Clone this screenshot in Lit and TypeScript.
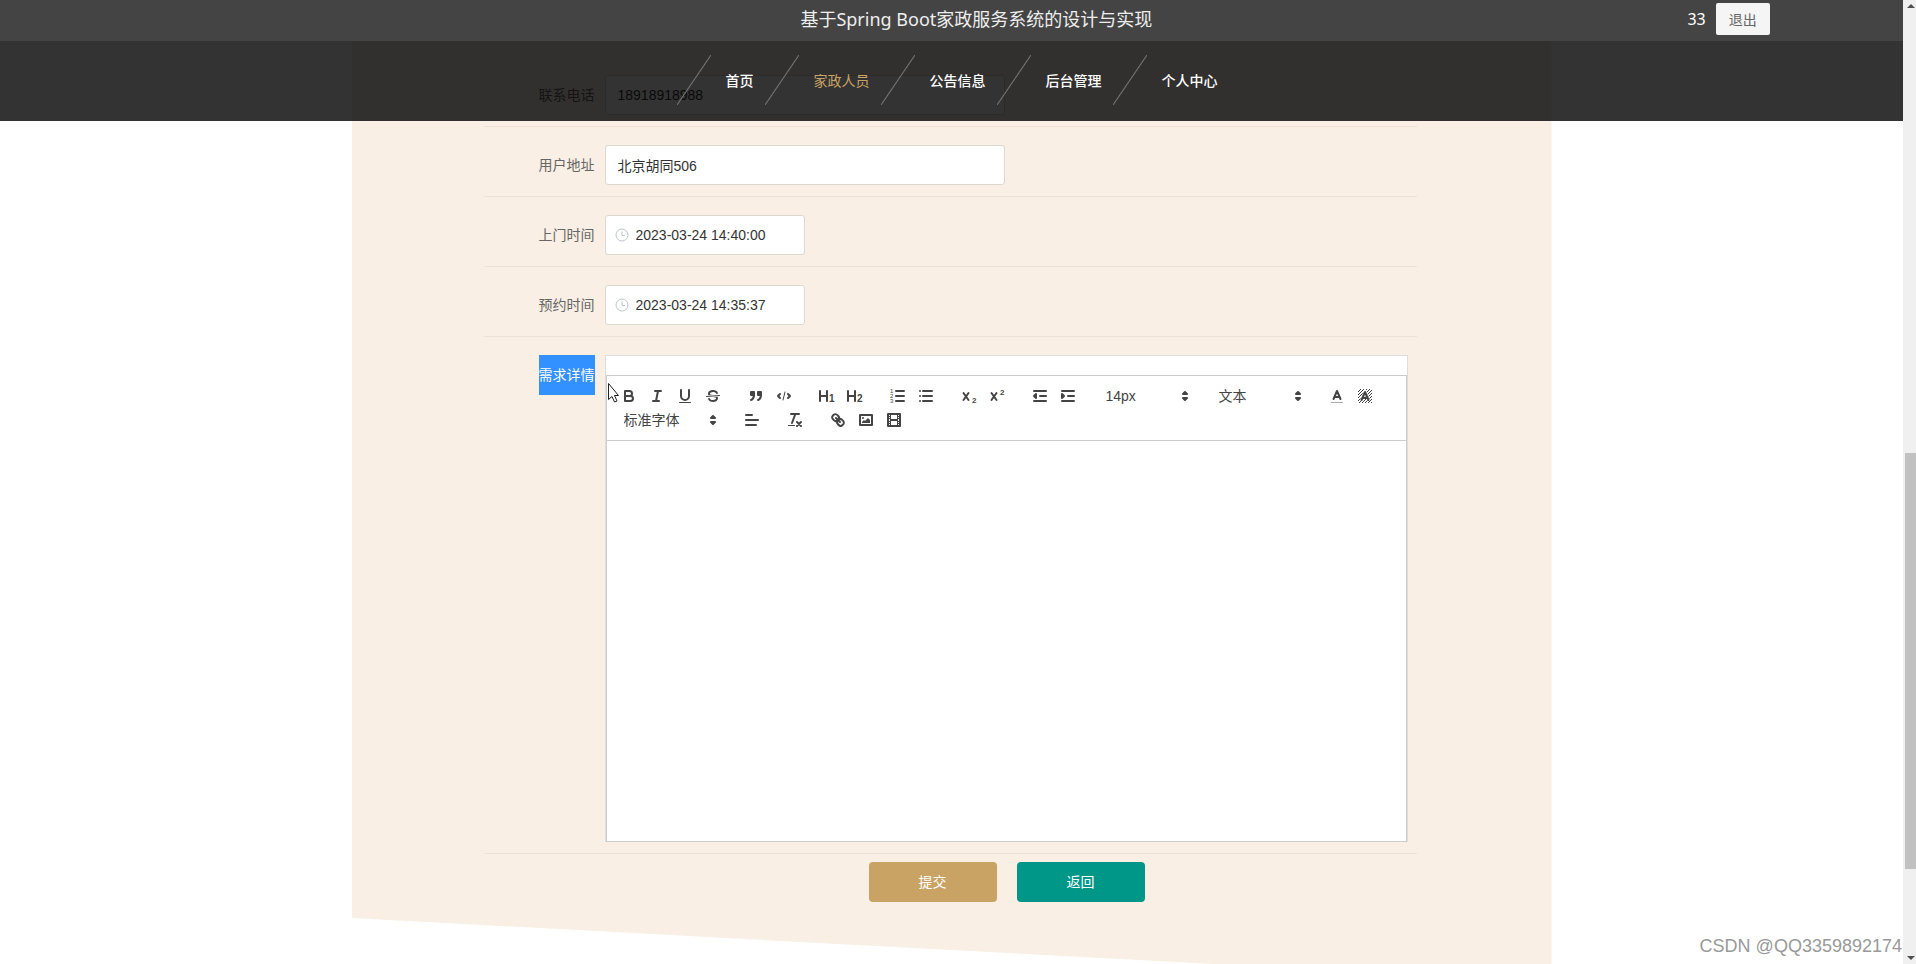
import { LitElement, html, css, svg } from "lit";
import { customElement, property, state } from "lit/decorators.js";
import { classMap } from "lit/directives/class-map.js";

const icons: Record<string, unknown> = {
  bold: svg`<path class="s" d="M5,4H9.5A2.5,2.5,0,0,1,9.5,9H5Z"/><path class="s" d="M5,9h5.5A2.5,2.5,0,0,1,10.5,14H5Z"/>`,
  italic: svg`<path class="s" d="M7,4H13M5,14H11M8,14L10,4"/>`,
  underline: svg`<path class="s" d="M5,3V9a4,4,0,0,0,8,0V3"/><rect class="f" x="3" y="15" width="12" height="1" rx=".5"/>`,
  strike: svg`<path class="s thin" d="M15.5,8.5L2.5,9.5"/><path class="f" d="M9.007,8C6.542,7.791,6,7.519,6,6.5,6,5.792,7.283,5,9,5c1.571,0,2.765.679,2.969,1.309a1,1,0,0,0,1.9-.617C13.356,4.106,11.354,3,9,3,6.2,3,4,4.538,4,6.5a3.2,3.2,0,0,0,.5,1.843Z"/><path class="f" d="M8.984,10C11.457,10.208,12,10.479,12,11.5c0,.708-1.283,1.5-3,1.5-1.571,0-2.765-.679-2.969-1.309a1,1,0,1,0-1.9.617C4.644,13.894,6.646,15,9,15c2.8,0,5-1.538,5-3.5a3.2,3.2,0,0,0-.5-1.843Z"/>`,
  quote: svg`<path class="s f" d="M4,5h3v3H4ZM11,5h3v3h-3Z"/><path class="s f" d="M7,8c0,4.031-3,5-3,5M14,8c0,4.031-3,5-3,5"/>`,
  code: svg`<path class="s" d="M5,7L3,9L5,11M13,7L15,9L13,11"/><path class="s thin" d="M10,5L8,13"/>`,
  h1: svg`<path class="s" d="M2,4V14M9,4V14M2,9H9"/><text x="11" y="15" font-size="10" font-weight="700">1</text>`,
  h2: svg`<path class="s" d="M2,4V14M9,4V14M2,9H9"/><text x="11" y="15" font-size="10" font-weight="700">2</text>`,
  ordered: svg`<path class="s" d="M7,4H15M7,9H15M7,14H15"/><text x="1" y="6" font-size="6">1</text><text x="1" y="11" font-size="6">2</text><text x="1" y="16" font-size="6">3</text>`,
  bullet: svg`<path class="s" d="M6,4H15M6,9H15M6,14H15M3,4h.01M3,9h.01M3,14h.01"/>`,
  sub: svg`<path class="s" d="M3.5,6L8.5,13M8.5,6L3.5,13"/><text x="12" y="16" font-size="8" font-weight="700">2</text>`,
  sup: svg`<path class="s" d="M3.5,6L8.5,13M8.5,6L3.5,13"/><text x="12" y="8" font-size="8" font-weight="700">2</text>`,
  outdent: svg`<path class="s" d="M3,14H15M3,4H15M9,9H15"/><path class="s f" d="M5,7V11L3,9Z"/>`,
  indent: svg`<path class="s" d="M3,14H15M3,4H15M9,9H15"/><path class="s f" d="M3,7V11L5,9Z"/>`,
  color: svg`<path class="bar" d="M3,15.5H15"/><path class="s" d="M5.5,12L9,4L12.5,12M6.6,10H11.4"/>`,
  background: svg`<path class="s hatch" d="M2,5L5,2M2,8L8,2M2,11L11,2M2,14L14,2M3,16L16,3M6,16L16,6M9,16L16,9M12,16L16,12M15,16L16,15"/><path class="halo" d="M5.5,13L9,5L12.5,13"/><path class="s" d="M5.5,13L9,5L12.5,13M6.6,11H11.4"/>`,
  align: svg`<path class="s" d="M3,9H15M3,14H13M3,4H9"/>`,
  clean: svg`<path class="s" d="M5,3H13M6,12L9.35,3M11,11L15,15M15,11L11,15"/><rect class="f" x="2" y="14" width="7" height="1" rx=".5"/>`,
  link: svg`<path class="s" d="M7,7L11,11"/><path class="s" d="M8.9,4.577a3.476,3.476,0,0,1,.36,4.679A3.476,3.476,0,0,1,4.577,8.9C3.185,7.5,2.035,6.4,4.217,4.217S7.5,3.185,8.9,4.577Z"/><path class="s" d="M13.423,9.1a3.476,3.476,0,0,0-4.679-.36,3.476,3.476,0,0,0,.36,4.679c1.392,1.392,2.5,2.542,4.679.36S14.815,10.5,13.423,9.1Z"/>`,
  image: svg`<rect class="s" x="3" y="4" width="12" height="10"/><circle class="f" cx="6" cy="7" r="1"/><path class="f" d="M5,12V11L7,9L8,10L11,7L13,9V12Z"/>`,
  video: svg`<rect class="s" x="3" y="3" width="12" height="12"/><path class="f" d="M5,3h1v12H5ZM12,3h1v12H12ZM5,8h8v2H5ZM3,5h3v1H3ZM3,7h3v1H3ZM3,10h3v1H3ZM3,12h3v1H3ZM12,5h3v1H12ZM12,7h3v1H12ZM12,10h3v1H12ZM12,12h3v1H12Z"/>`,
};

type Tool = { icon: string; title: string };
type Picker = { label: string; options: string[]; wide?: boolean };

const b = (icon: string, title: string): Tool => ({ icon, title });

const tools: (Tool[] | Picker)[] = [
  [b("bold", "加粗"), b("italic", "斜体"), b("underline", "下划线"), b("strike", "删除线")],
  [b("quote", "引用"), b("code", "代码")],
  [b("h1", "标题一"), b("h2", "标题二")],
  [b("ordered", "有序列表"), b("bullet", "无序列表")],
  [b("sub", "下标"), b("sup", "上标")],
  [b("outdent", "减少缩进"), b("indent", "增加缩进")],
  { label: "字号", options: ["14px"] },
  { label: "标题", options: ["文本"] },
  [b("color", "文字颜色"), b("background", "背景颜色")],
  { label: "字体", options: ["标准字体"], wide: true },
  [b("align", "对齐")],
  [b("clean", "清除格式")],
  [b("link", "链接"), b("image", "图片"), b("video", "视频")],
];

@customElement("rich-editor")
export class RichEditor extends LitElement {
  static styles = css`
    :host {
      display: block;
      box-sizing: border-box;
      border: 1px solid #ddd;
      border-bottom: 0;
      background: #fff;
      padding-top: 19px;
      color: #444;
      font: 14px/24px "Liberation Sans", "Noto Sans CJK SC", sans-serif;
    }
    .toolbar {
      display: flex;
      flex-wrap: wrap;
      column-gap: 15px;
      padding: 8px;
      border: 1px solid #ccc;
    }
    .group {
      display: flex;
    }
    .tool {
      box-sizing: border-box;
      width: 28px;
      height: 24px;
      padding: 3px 5px;
      border: 0;
      background: none;
      cursor: pointer;
    }
    svg {
      display: block;
      width: 18px;
      height: 18px;
    }
    .s {
      fill: none;
      stroke: #444;
      stroke-width: 2;
      stroke-linecap: round;
      stroke-linejoin: round;
    }
    .thin {
      stroke-width: 1;
    }
    .f {
      fill: #444;
    }
    .bar {
      stroke: #aaa;
      stroke-width: 1;
    }
    .hatch {
      stroke-width: 1;
      stroke-linecap: butt;
    }
    .halo {
      fill: none;
      stroke: #fff;
      stroke-width: 3;
    }
    text {
      fill: #444;
      font-family: "Liberation Sans", sans-serif;
    }
    .picker {
      display: grid;
      width: 98px;
      height: 24px;
      align-items: center;
    }
    .wide {
      width: 108px;
    }
    .picker > * {
      grid-area: 1 / 1;
    }
    .picker svg {
      justify-self: end;
      margin-right: 1px;
      pointer-events: none;
    }
    .select {
      appearance: none;
      width: 100%;
      height: 24px;
      padding: 0 9px;
      border: 0;
      background: none;
      color: #444;
      font: inherit;
    }
    .area {
      display: block;
      box-sizing: border-box;
      width: 100%;
      height: 401px;
      padding: 12px 15px;
      border: 1px solid #ccc;
      border-top: 0;
      resize: none;
      outline: 0;
      background: #fff;
      font: inherit;
    }
  `;

  @property() label = "";
  @state() private content = "";

  private renderPicker(p: Picker) {
    return html`<span class=${classMap({ picker: true, wide: !!p.wide })}>
      <select class="select" aria-label=${p.label}>
        ${p.options.map((o) => html`<option>${o}</option>`)}
      </select>
      <svg viewBox="0 0 18 18" aria-hidden="true">
        <path class="s f" d="M7,11L9,13L11,11ZM7,7L9,5L11,7Z" />
      </svg>
    </span>`;
  }

  private renderGroup(group: Tool[]) {
    return html`<span class="group">
      ${group.map(
        (t) => html`<button class="tool" type="button" aria-label=${t.title}>
          <svg viewBox="0 0 18 18" aria-hidden="true">${icons[t.icon]}</svg>
        </button>`
      )}
    </span>`;
  }

  render() {
    return html`
      <div class="toolbar" role="toolbar">
        ${tools.map((t) => (Array.isArray(t) ? this.renderGroup(t) : this.renderPicker(t)))}
      </div>
      <textarea
        class="area"
        aria-label=${this.label}
        .value=${this.content}
        @input=${(e: Event) => (this.content = (e.target as HTMLTextAreaElement).value)}
      ></textarea>
    `;
  }
}

const fields = [
  { id: "phone", label: "联系电话", value: "18918918988", date: false },
  { id: "address", label: "用户地址", value: "北京胡同506", date: false },
  { id: "visit", label: "上门时间", value: "2023-03-24 14:40:00", date: true },
  { id: "booking", label: "预约时间", value: "2023-03-24 14:35:37", date: true },
];

@customElement("app-root")
export class AppRoot extends LitElement {
  static styles = css`
    :host {
      display: flex;
      height: 100vh;
      overflow: hidden;
      background: #fff;
      font: 14px/20px "Noto Sans CJK SC", sans-serif;
    }
    .page {
      position: relative;
      flex: 1;
      min-width: 0;
      overflow: hidden;
    }
    .header {
      position: absolute;
      inset: 0 0 auto;
      z-index: 2;
    }
    .topbar {
      display: flex;
      justify-content: space-between;
      align-items: center;
      box-sizing: border-box;
      height: 41px;
      padding: 0 7% 3px;
      background: #444;
      color: #fff;
      font-family: "Noto Sans", "Noto Sans CJK SC", sans-serif;
    }
    .brand {
      width: 132px;
    }
    .title {
      margin: 0;
      color: #eee;
      font-size: 18px;
      font-weight: 400;
      line-height: 24px;
    }
    .account {
      display: flex;
      align-items: center;
      gap: 10px;
      font-size: 16px;
    }
    .logout {
      height: 32px;
      padding: 0 13px;
      border: 0;
      border-radius: 2px;
      background: #f5f5f5;
      color: #666;
      font: 14px/32px "Noto Sans CJK SC", sans-serif;
    }
    .nav {
      background: rgba(0, 0, 0, 0.8);
    }
    .menu {
      display: flex;
      justify-content: center;
      margin: 0;
      padding: 0 0 2px 36px;
      list-style: none;
      line-height: 78px;
    }
    .item {
      display: flex;
      align-items: center;
      padding-right: 28px;
    }
    .item::before {
      content: "";
      width: 34px;
      height: 50px;
      margin: 0 15px 0 -17px;
      background: linear-gradient(
        to bottom right,
        transparent calc(50% - 1px),
        #777 50%,
        transparent calc(50% + 1px)
      );
    }
    .link {
      color: #fff;
      font-weight: 500;
      text-decoration: none;
    }
    .active {
      color: #c9a363;
      font-weight: 400;
    }
    .panel {
      box-sizing: border-box;
      max-width: 1200px;
      margin: 0 auto;
      padding: 57px 135px 80px 132px;
      background: #f9efe4;
      clip-path: polygon(0 0, 100% 0, 100% 100%, 0 calc(100% - 64px));
    }
    .row {
      display: flex;
      gap: 10px;
      padding: 18px 9px 11px 55px;
      border-bottom: 1px solid #eee2d8;
    }
    .label {
      box-sizing: border-box;
      width: 56px;
      flex: none;
      height: 40px;
      line-height: 38px;
      color: #666;
    }
    .selected {
      background: #3390ff;
      color: #fff;
    }
    .field {
      display: grid;
      align-items: center;
      width: 400px;
    }
    .date {
      width: 200px;
    }
    .field > * {
      grid-area: 1 / 1;
    }
    .input {
      box-sizing: border-box;
      width: 100%;
      height: 40px;
      padding: 0 12px;
      border: 1px solid #ddd8cf;
      border-radius: 3px;
      background: #fff;
      color: #333;
      font: 14px/20px "Liberation Sans", "Noto Sans CJK SC", sans-serif;
    }
    .date .input {
      padding-left: 30px;
    }
    .clock {
      width: 14px;
      height: 14px;
      margin-left: 10px;
      fill: none;
      stroke: #c0c4cc;
      pointer-events: none;
      z-index: 1;
    }
    rich-editor {
      flex: 1;
      min-width: 0;
    }
    .actions {
      display: flex;
      justify-content: center;
      gap: 20px;
      padding: 8px 0 0 113px;
    }
    .action {
      width: 128px;
      height: 40px;
      padding: 0 0 2px;
      border: 0;
      border-radius: 4px;
      background: #c9a363;
      color: #fff;
      font: inherit;
    }
    .back {
      background: #009688;
    }
    .scrollbar {
      flex: none;
      display: flex;
      flex-direction: column;
      align-items: center;
      box-sizing: border-box;
      width: 13px;
      padding: 4px 0 4px 2px;
      background: #f0f0f0;
    }
    .arrow {
      width: 8px;
      height: 4px;
      fill: #505050;
    }
    .track {
      flex: 1;
      display: flex;
      flex-direction: column;
      width: 100%;
    }
    .before {
      flex: 445;
    }
    .thumb {
      flex: 416;
      background: #c1c1c1;
    }
    .after {
      flex: 87;
    }
    .cursor {
      position: absolute;
      left: 0;
      top: 27px;
      width: 14px;
      height: 22px;
      pointer-events: none;
    }
    .editor {
      position: relative;
      display: flex;
      flex: 1;
      min-width: 0;
    }
    .watermark {
      position: absolute;
      right: 1px;
      bottom: 7px;
      color: #999;
      font: 18px/22px "Liberation Sans", sans-serif;
    }
  `;

  @state() private current = "家政人员";

  private menu = ["首页", "家政人员", "公告信息", "后台管理", "个人中心"];

  render() {
    return html`
      <div class="page">
        <header class="header">
          <div class="topbar">
            <span class="brand"></span>
            <h1 class="title">基于Spring Boot家政服务系统的设计与实现</h1>
            <div class="account">
              <span>33</span>
              <button class="logout" type="button">退出</button>
            </div>
          </div>
          <nav class="nav">
            <ul class="menu">
              ${this.menu.map(
                (m) => html`<li class="item">
                  <a
                    class=${classMap({ link: true, active: m === this.current })}
                    href="#"
                    @click=${(e: Event) => {
                      e.preventDefault();
                      this.current = m;
                    }}
                    >${m}</a
                  >
                </li>`
              )}
            </ul>
          </nav>
        </header>
        <main>
          <form class="panel" @submit=${(e: Event) => e.preventDefault()}>
            ${fields.map(
              (f) => html`<div class="row">
                <label class="label" for=${f.id}>${f.label}</label>
                <div class=${classMap({ field: true, date: f.date })}>
                  <input class="input" id=${f.id} type="text" .value=${f.value} />
                  ${f.date
                    ? html`<svg class="clock" viewBox="0 0 14 14" aria-hidden="true">
                        <circle cx="7" cy="7" r="6" />
                        <path d="M7,3.5V7.5H10" />
                      </svg>`
                    : null}
                </div>
              </div>`
            )}
            <div class="row">
              <span class="label selected">需求详情</span>
              <div class="editor">
                <rich-editor label="需求详情"></rich-editor>
                <svg class="cursor" viewBox="0 0 14 22" aria-hidden="true">
                  <path
                    d="M3.5,1.5V17.5L7,14.5L9.5,20L12,19L9.5,13.5H13.5Z"
                    fill="#fff"
                    stroke="#222"
                  />
                </svg>
              </div>
            </div>
            <div class="actions">
              <button class="action" type="submit">提交</button>
              <button class="action back" type="button">返回</button>
            </div>
          </form>
        </main>
        <span class="watermark">CSDN @QQ3359892174</span>
      </div>
      <div class="scrollbar" aria-hidden="true">
        <svg class="arrow" viewBox="0 0 8 4"><path d="M0,4L4,0L8,4Z" /></svg>
        <div class="track">
          <span class="before"></span><span class="thumb"></span><span class="after"></span>
        </div>
        <svg class="arrow" viewBox="0 0 8 4"><path d="M0,0L4,4L8,0Z" /></svg>
      </div>
    `;
  }
}
